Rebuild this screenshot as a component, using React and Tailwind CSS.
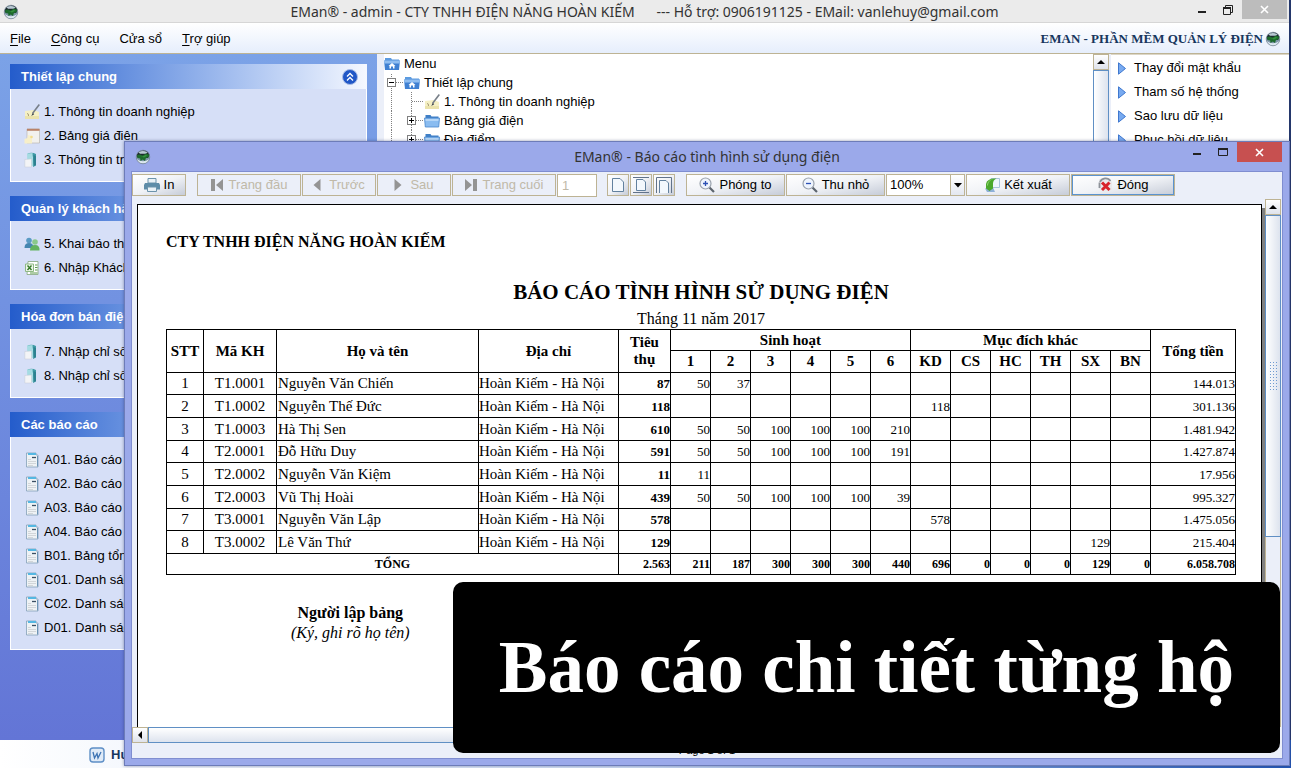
// src/App.jsx
import React from "react";
import clsx from "clsx";

const MENUS = [
  { key: "F", rest: "ile" },
  { key: "C", rest: "ông cụ" },
  { key: "", rest: "Cửa sổ" },
  { key: "T", rest: "rợ giúp" },
];

const PANELS = [
  {
    title: "Thiết lập chung",
    items: [
      { icon: "note", label: "1. Thông tin doanh nghiệp" },
      { icon: "price", label: "2. Bảng giá điện" },
      { icon: "meter", label: "3. Thông tin trạm" },
    ],
  },
  {
    title: "Quản lý khách hàng",
    items: [
      { icon: "users", label: "5. Khai báo thông tin" },
      { icon: "excel", label: "6. Nhập Khách hàng" },
    ],
  },
  {
    title: "Hóa đơn bán điện",
    items: [
      { icon: "meter", label: "7. Nhập chỉ số" },
      { icon: "meter", label: "8. Nhập chỉ số" },
    ],
  },
  {
    title: "Các báo cáo",
    items: [
      { icon: "report", label: "A01. Báo cáo" },
      { icon: "report", label: "A02. Báo cáo" },
      { icon: "report", label: "A03. Báo cáo" },
      { icon: "report", label: "A04. Báo cáo" },
      { icon: "report", label: "B01. Bảng tổng" },
      { icon: "report", label: "C01. Danh sách" },
      { icon: "report", label: "C02. Danh sách" },
      { icon: "report", label: "D01. Danh sách" },
    ],
  },
];

const TREE = [
  { guides: [], icon: "home", label: "Menu" },
  { guides: ["minus"], icon: "home", label: "Thiết lập chung" },
  { guides: ["line", "tee"], icon: "note", label: "1. Thông tin doanh nghiệp" },
  { guides: ["line", "plus"], icon: "folder", label: "Bảng giá điện" },
  { guides: ["line", "plus"], icon: "folder", label: "Địa điểm" },
];

const SHORTCUTS = ["Thay đổi mật khẩu", "Tham số hệ thống", "Sao lưu dữ liệu", "Phục hồi dữ liệu"];

const BANDS = ["1", "2", "3", "4", "5", "6"];
const PURPOSES = ["KD", "CS", "HC", "TH", "SX", "BN"];
const ADDRESS = "Hoàn Kiếm - Hà Nội";

const ROWS = [
  { code: "T1.0001", name: "Nguyễn Văn Chiến", used: "87", cells: ["50", "37", "", "", "", "", "", "", "", "", "", ""], total: "144.013" },
  { code: "T1.0002", name: "Nguyễn Thế Đức", used: "118", cells: ["", "", "", "", "", "", "118", "", "", "", "", ""], total: "301.136" },
  { code: "T1.0003", name: "Hà Thị Sen", used: "610", cells: ["50", "50", "100", "100", "100", "210", "", "", "", "", "", ""], total: "1.481.942" },
  { code: "T2.0001", name: "Đỗ Hữu Duy", used: "591", cells: ["50", "50", "100", "100", "100", "191", "", "", "", "", "", ""], total: "1.427.874" },
  { code: "T2.0002", name: "Nguyễn Văn Kiệm", used: "11", cells: ["11", "", "", "", "", "", "", "", "", "", "", ""], total: "17.956" },
  { code: "T2.0003", name: "Vũ Thị Hoài", used: "439", cells: ["50", "50", "100", "100", "100", "39", "", "", "", "", "", ""], total: "995.327" },
  { code: "T3.0001", name: "Nguyễn Văn Lập", used: "578", cells: ["", "", "", "", "", "", "578", "", "", "", "", ""], total: "1.475.056" },
  { code: "T3.0002", name: "Lê Văn Thứ", used: "129", cells: ["", "", "", "", "", "", "", "", "", "", "129", ""], total: "215.404" },
];

const SUMS = ["2.563", "211", "187", "300", "300", "300", "440", "696", "0", "0", "0", "129", "0", "6.058.708"];

/* ---------- icons ---------- */

function Svg({ w = 16, h = 16, className, children }) {
  return (
    <svg width={w} height={h} viewBox={`0 0 ${w} ${h}`} className={clsx("shrink-0", className)} aria-hidden="true">
      {children}
    </svg>
  );
}

function Globe() {
  return (
    <Svg>
      <circle cx="8" cy="8" r="6.8" fill="#7d95a8" />
      <path d="M1.500 7A6.800 6.800 0 0 1 14.500 6l-1.500 3H3z" fill="#1f2a30" />
      <path d="M3.500 3.200Q8 .8 12.500 3.400L11 4.800H5z" fill="#b9c9d3" />
      <path d="M1.600 10q6.400 4.500 12.800 0A6.800 6.800 0 0 1 1.600 10z" fill="#dce8f0" />
      <path d="M2 6l3-.6 2.500 1 3.500-1.800 3.300 1.200-.8 2.400-2.700 1L10 12l-2.200-1.400L5.500 12l-.3-2.600L2.500 9z" fill="#1d6b2c" />
      <path d="M4 6.600l3.500.9 3-1.500 2 .6-3.500 2z" fill="#37923f" />
      <circle cx="8" cy="8" r="6.8" fill="none" stroke="#6b7b88" strokeWidth=".6" />
    </Svg>
  );
}

function ItemIcon({ name }) {
  if (name === "note") {
    return (
      <Svg>
        <path d="M1 7l9-1 5 2v6.500H1z" fill="#f5f0c4" />
        <path d="M1 12h14v3H1z" fill="#ebe3ab" />
        <path d="M3 9.500q2 0 1.500 2.500" fill="none" stroke="#a89f78" />
        <path d="M15.300.6L8.500 9.500" stroke="#777f88" strokeWidth="1.600" />
        <path d="M8.800 9l-1.600 3 3-1.800z" fill="#3b424a" />
      </Svg>
    );
  }
  if (name === "price") {
    return (
      <Svg>
        <path d="M3 1h12.500v14H3z" fill="#f2f1ee" stroke="#b5b0a4" strokeWidth=".6" />
        <path d="M3 .8h12.500v2H3z" fill="#b98268" />
        <path d="M.5 11l3-1 .5-3 4 1v7.500H.5z" fill="#f7efc9" />
        <circle cx="7.500" cy="9" r="1.300" fill="#f3dd8c" />
      </Svg>
    );
  }
  if (name === "meter") {
    return (
      <Svg>
        <path d="M3.500 1.500Q8 0 12 2v11.500l-3 1.500V5z" fill="#3f9aa5" />
        <path d="M3 1.500L8.500 1l1 13H3.500z" fill="#a5dbe2" />
        <path d="M9.500 3l2.500 1v9l-2.500 1z" fill="#2d8190" />
        <path d="M.8 7.500l6.700-.6V15H.8z" fill="#f3f4f6" stroke="#c4cbd6" strokeWidth=".5" />
      </Svg>
    );
  }
  if (name === "users") {
    return (
      <Svg>
        <circle cx="5" cy="4.500" r="2.800" fill="#5a9bc4" />
        <path d="M.5 12q0-5 4.500-5t4.500 5z" fill="#4586b0" />
        <circle cx="11" cy="6" r="2.800" fill="#8ac98b" />
        <path d="M6 14.500Q6 9 11 9t4.500 5.500z" fill="#63b35f" />
      </Svg>
    );
  }
  if (name === "excel") {
    return (
      <Svg>
        <path d="M4 1.500h10v13H3z" fill="#fff" stroke="#84a67d" strokeWidth=".8" />
        <path d="M11 5h2.500M11 7.500h2.500M11 10h2.500M6 13h7.500" stroke="#5c9a4c" />
        <path d="M1.500 4h8v7.500h-8z" fill="#edf6e9" stroke="#8db884" />
        <path d="M3.500 5.500l4 4.500M7.500 5.500l-4 4.500" stroke="#357a27" strokeWidth="1.400" />
      </Svg>
    );
  }
  if (name === "report") {
    return (
      <Svg>
        <path d="M2.500 1H12v2h2v12H2.500z" fill="#eef2f5" stroke="#84a0b8" strokeWidth=".8" />
        <path d="M4 1h8v2H4z" fill="#55b7e2" />
        <path d="M8 5.500h4" stroke="#3b4f63" strokeWidth="1.300" />
        <path d="M4 7.500h3M4 9.500h8M4 11.500h8M4 13.500h5" stroke="#d2d6d9" />
        <path d="M13.500 4v10.500" stroke="#6c94b5" />
      </Svg>
    );
  }
  if (name === "home") {
    return (
      <Svg>
        <path d="M1 2h6l1 1.500h7V7H1z" fill="#5c9be0" />
        <path d="M0 4.500h16l-1 9.500H1z" fill="#3f80d2" />
        <path d="M0 4.500h16l-.4 3H.4z" fill="#8fbdf0" />
        <path d="M8 7l3.500 3h-1v2.500H9v-2H7v2H5.500V10h-1z" fill="#fff" />
      </Svg>
    );
  }
  return (
    <Svg>
      <path d="M1.500 2h5l1 1.500h7V7h-13z" fill="#3f7fc6" />
      <path d="M.5 5h15l-.8 9H1.300z" fill="#8abcf0" stroke="#4787cc" strokeWidth=".8" />
      <path d="M1.500 6h13l-.1 2H1.600z" fill="#b5d6f7" />
    </Svg>
  );
}

// one 20px column of the tree: dotted guide line with an optional expander
function Guide({ kind }) {
  const box = kind === "plus" || kind === "minus";
  return (
    <Svg w={20} h={19}>
      <path d={kind === "minus" ? "M7.500 1v18" : "M7.500 0v19"} stroke="#808080" strokeDasharray="1 1" />
      {kind !== "line" && <path d="M8 9.500h12" stroke="#808080" strokeDasharray="1 1" />}
      {box && <rect x="3.500" y="5.500" width="8" height="8" fill="#fff" stroke="#808080" />}
      {box && <path d="M5 9.500h5" stroke="#000" />}
      {kind === "plus" && <path d="M7.500 7v5" stroke="#000" />}
    </Svg>
  );
}

function Magnifier({ plus }) {
  return (
    <Svg>
      <path d="M10.500 10.500l4.500 4.500" stroke="#5d656e" strokeWidth="2.200" />
      <circle cx="6.500" cy="6.500" r="5.500" fill="#eef4fd" stroke="#9aa2ac" strokeWidth="1.200" />
      <path d={plus ? "M4 6.500h5M6.500 4v5" : "M4 6.500h5"} stroke="#2c50b5" strokeWidth="1.300" />
    </Svg>
  );
}

function PageIcon({ fit }) {
  return (
    <Svg>
      {fit === "height" && <path d="M0 .5h16M0 15.500h16" stroke="#62738a" />}
      {fit === "width" && <path d="M.5 16V.5h15V16" fill="none" stroke="#62738a" />}
      <path
        d={fit === "width" ? "M3.500 16V3.500H10l2.500 2.500v10" : fit ? "M3.500 2.500H10l2.500 2.500v8.500h-9z" : "M2.500 1.500H10l3.500 3.500v9.500h-11z"}
        fill="#f3f8fd"
        stroke="#62819f"
      />
    </Svg>
  );
}

function Cross() {
  return (
    <Svg w={9} h={9}>
      <path d="M1 1l7 7M8 1L1 8" stroke="#fff" strokeWidth="1.600" />
    </Svg>
  );
}

/* ---------- shared bits ---------- */

function ToolButton({ className, disabled, focused, children, ...rest }) {
  return (
    <button
      type="button"
      disabled={disabled}
      className={clsx(
        "flex h-[22px] items-center justify-center whitespace-nowrap border border-[#bdb394] text-[13px]",
        disabled ? "text-[#c0b9a8]" : "bg-linear-to-br from-white via-[#f0f2f6] to-[#c6ccd8] text-black",
        focused && "outline outline-1 -outline-offset-2 outline-[#5b93cf]",
        className
      )}
      {...rest}
    >
      {children}
    </button>
  );
}

function ScrollArrow({ dir }) {
  return (
    <button
      type="button"
      aria-label={dir === "up" ? "Cuộn lên" : "Cuộn trái"}
      className="flex size-4 shrink-0 items-center justify-center border border-[#bdb394] bg-linear-to-b from-white to-[#dfe3ec]"
    >
      <Svg w={8} h={8}>
        <path d={dir === "up" ? "M0 6l4-4 4 4z" : "M6 0L2 4l4 4z"} fill="#000" />
      </Svg>
    </button>
  );
}

/* ---------- main window ---------- */

function TitleBar() {
  return (
    <header className="grid h-[23px] shrink-0 grid-cols-[1fr_auto_1fr] border-b border-[#d6d6d6] bg-[#ebebeb]">
      <div className="flex items-center pl-[3px]">
        <Globe />
      </div>
      <h1 className="whitespace-pre font-['Noto_Sans',sans-serif] text-[14px] leading-[23px] text-[#333]">
        {"EMan® - admin - CTY TNHH ĐIỆN NĂNG HOÀN KIẾM      --- Hỗ trợ: 0906191125 - EMail: vanlehuy@gmail.com"}
      </h1>
      <div className="flex items-start justify-end pr-0.5">
        <button type="button" aria-label="Thu nhỏ cửa sổ" className="flex h-5 w-6 items-center justify-center">
          <Svg w={8} h={8}>
            <path d="M0 5h8v2H0z" fill="#222" />
          </Svg>
        </button>
        <button type="button" aria-label="Khôi phục" className="flex h-5 w-7 items-center justify-center">
          <Svg w={10} h={10}>
            <path d="M2.500 2V.5h7v7H8" fill="none" stroke="#222" />
            <path d="M.5 3h7v6.500h-7z" fill="none" stroke="#222" />
            <path d="M0 2h8v2H0z" fill="#222" />
          </Svg>
        </button>
        <button type="button" aria-label="Đóng ứng dụng" className="flex h-[19px] w-[45px] items-center justify-center bg-[#bcbcbc]">
          <Cross />
        </button>
      </div>
    </header>
  );
}

function MenuBar() {
  return (
    <nav className="flex h-[31px] shrink-0 items-center border-b border-[#bdb394] bg-linear-to-b from-white to-[#e6eefc] pl-2.5 pr-2 pt-px">
      <div className="flex gap-5 text-[13px]">
        {MENUS.map((m) => (
          <button type="button" key={m.rest}>
            <span className="underline underline-offset-2">{m.key}</span>
            {m.rest}
          </button>
        ))}
      </div>
      <div className="ml-auto flex items-center gap-0.5 font-['Liberation_Serif',serif] text-[13px] font-bold text-[#17365d]">
        EMAN - PHẦN MỀM QUẢN LÝ ĐIỆN
        <Globe />
      </div>
    </nav>
  );
}

function Panel({ title, items }) {
  return (
    <section>
      <div className="flex h-[25px] items-center justify-between bg-linear-to-r from-[#245ccb] to-[#f5f8ff] pl-[11px] pr-2">
        <h2 className="text-[13px] font-bold text-white">{title}</h2>
        <button type="button" aria-label={`Thu gọn ${title}`}>
          <Svg w={18} h={18}>
            <circle cx="9" cy="9" r="7.500" fill="#2057c7" stroke="#a9bde6" />
            <path d="M6 8.500l3-3 3 3M6 12.500l3-3 3 3" fill="none" stroke="#fff" strokeWidth="1.300" />
          </Svg>
        </button>
      </div>
      <ul className="border border-t-0 border-white bg-[#d6dff7] pb-[9px] pl-[13px] pt-[11px] text-[13px]">
        {items.map((it) => (
          <li key={it.label} className="flex h-6 items-center gap-1">
            <ItemIcon name={it.icon} />
            <a href="#" className="whitespace-nowrap">{it.label}</a>
          </li>
        ))}
      </ul>
    </section>
  );
}

function Tree() {
  return (
    <div className="flex min-w-0 flex-1 bg-white">
      <ul className="flex-1 text-[13px]">
        {TREE.map((n) => (
          <li key={n.label} className="flex h-[19px] items-center">
            {n.guides.map((g, i) => (
              <Guide key={i} kind={g} />
            ))}
            <ItemIcon name={n.icon} />
            <span className="ml-1">{n.label}</span>
          </li>
        ))}
      </ul>
      <div className="flex w-4 flex-col bg-[#ebeff9]">
        <ScrollArrow dir="up" />
        <div className="flex-1 border border-[#5f8fc4] bg-linear-to-r from-white to-[#dde3ee]" />
      </div>
    </div>
  );
}

function Shortcuts() {
  return (
    <ul className="w-[178px] border-t border-[#dcd6c6] bg-white pl-[7px] pt-px text-[13px]">
      {SHORTCUTS.map((s) => (
        <li key={s} className="flex h-6 items-center gap-2">
          <Svg w={8} h={13}>
            <path d="M.5 .8v11.400L7.500 6.500z" fill="#78aaf0" stroke="#3f78cf" />
          </Svg>
          <a href="#">{s}</a>
        </li>
      ))}
    </ul>
  );
}

/* ---------- report window ---------- */

function Toolbar() {
  return (
    <div className="flex h-[27px] shrink-0 items-start pt-0.5">
      <ToolButton className="w-[54px] gap-1">
        <Svg>
          <path d="M4 1.500h8V6H4z" fill="#e9f1f6" stroke="#6c93ab" />
          <path d="M1 6h14l1 2v4.500H0V8z" fill="#5d8ca8" />
          <path d="M3.500 10h9v4.500h-9z" fill="#e9f1f6" stroke="#6c93ab" />
        </Svg>
        In
      </ToolButton>

      <div className="ml-[11px] flex gap-px">
        <ToolButton disabled className="w-[104px] gap-1.5">
          <Svg w={12} h={12}>
            <path d="M0 0h4v12H0zM12 0v12L5 6z" fill="#949494" />
          </Svg>
          Trang đầu
        </ToolButton>
        <ToolButton disabled className="w-[74px] gap-2">
          <Svg w={8} h={12}>
            <path d="M7.500 0v12L.5 6z" fill="#949494" />
          </Svg>
          Trước
        </ToolButton>
        <ToolButton disabled className="w-[74px] gap-2">
          <Svg w={8} h={12}>
            <path d="M.5 0v12l7-6z" fill="#949494" />
          </Svg>
          Sau
        </ToolButton>
        <ToolButton disabled className="w-[104px] gap-1.5">
          <Svg w={12} h={12}>
            <path d="M8 0h4v12H8zM0 0v12l7-6z" fill="#949494" />
          </Svg>
          Trang cuối
        </ToolButton>
        <input
          aria-label="Trang"
          defaultValue="1"
          disabled
          className="h-[23px] w-10 border border-[#bdb394] bg-white px-1 text-[13px] text-[#c0b9a8]"
        />
      </div>

      <div className="ml-2.5 flex gap-px">
        <ToolButton className="w-[22px]" aria-label="Cỡ thật"><PageIcon /></ToolButton>
        <ToolButton className="w-[22px]" aria-label="Vừa trang"><PageIcon fit="height" /></ToolButton>
        <ToolButton className="w-[22px]" aria-label="Vừa chiều rộng"><PageIcon fit="width" /></ToolButton>
      </div>

      <div className="ml-[11px] flex gap-px">
        <ToolButton className="w-[99px] gap-1">
          <Magnifier plus />
          Phóng to
        </ToolButton>
        <ToolButton className="w-[99px] gap-1">
          <Magnifier />
          Thu nhỏ
        </ToolButton>
        <div className="relative w-[79px]">
          <select
            aria-label="Tỷ lệ"
            className="block h-[22px] w-full appearance-none border border-[#bdb394] bg-white px-[3px] text-[13px] leading-5"
          >
            <option>100%</option>
          </select>
          <span className="pointer-events-none absolute inset-y-0 right-0 flex w-[15px] items-center justify-center border border-[#bdb394] bg-linear-to-b from-white to-[#e3e7f0]">
            <Svg w={8} h={5}>
              <path d="M0 0h8L4 4.500z" fill="#000" />
            </Svg>
          </span>
        </div>
        <ToolButton className="w-[104px] gap-1">
          <Svg>
            <path d="M7 1.500h8.500v9H7z" fill="#eef5fb" stroke="#a9c3da" />
            <path d="M1 11.500l8-1 2 4.500H3z" fill="#8fb1d8" />
            <path d="M12.500 1.500Q9 3 9 6.500v5L5.500 14 2 11.500V7Q3 1 12.500 1.500z" fill="#4ca82c" />
            <path d="M10 2Q4.500 3 4 8l-1 1V7.500Q4 2.500 10 2z" fill="#8fd672" />
          </Svg>
          Kết xuất
        </ToolButton>
        <ToolButton focused className="w-[104px] gap-1">
          <Svg>
            <path d="M2 2l10-1 3 4v8l-8 2-5-3z" fill="#e9eaec" />
            <path d="M3 5a6 6 0 0 1 10.500-1M2.500 11V5.500" fill="none" stroke="#8d9299" strokeWidth="1.800" />
            <path d="M5 5.500l7.500 7.500M12.500 5.500L5 13" stroke="#d8232a" strokeWidth="3" />
          </Svg>
          Đóng
        </ToolButton>
      </div>
    </div>
  );
}

const CELL = "border border-black p-0";

function ReportTable() {
  return (
    <table className="w-full table-fixed border-collapse text-[15px] leading-[17px]">
      <colgroup>
        <col className="w-[37px]" />
        <col className="w-[73px]" />
        <col />
        <col className="w-[140px]" />
        <col className="w-[52px]" />
        {BANDS.concat(PURPOSES).map((c) => (
          <col key={c} className="w-10" />
        ))}
        <col className="w-[85px]" />
      </colgroup>
      <thead>
        <tr className="h-[21px]">
          <th rowSpan={2} className={CELL}>STT</th>
          <th rowSpan={2} className={CELL}>Mã KH</th>
          <th rowSpan={2} className={CELL}>Họ và tên</th>
          <th rowSpan={2} className={CELL}>Địa chỉ</th>
          <th rowSpan={2} className={clsx(CELL, "px-2")}>Tiêu thụ</th>
          <th colSpan={6} className={CELL}>Sinh hoạt</th>
          <th colSpan={6} className={CELL}>Mục đích khác</th>
          <th rowSpan={2} className={CELL}>Tổng tiền</th>
        </tr>
        <tr className="h-[22px]">
          {BANDS.concat(PURPOSES).map((c) => (
            <th key={c} className={CELL}>{c}</th>
          ))}
        </tr>
      </thead>
      <tbody>
        {ROWS.map((r, i) => (
          <tr key={r.code} className={i % 3 === 0 ? "h-[22px]" : "h-[23px]"}>
            <td className={clsx(CELL, "text-center")}>{i + 1}</td>
            <td className={clsx(CELL, "text-center")}>{r.code}</td>
            <td className={clsx(CELL, "pl-px")}>{r.name}</td>
            <td className={CELL}>{ADDRESS}</td>
            <td className={clsx(CELL, "text-right text-[13px] font-bold")}>{r.used}</td>
            {r.cells.map((v, k) => (
              <td key={k} className={clsx(CELL, "text-right text-[13px]")}>{v}</td>
            ))}
            <td className={clsx(CELL, "text-right text-[13px]")}>{r.total}</td>
          </tr>
        ))}
      </tbody>
      <tfoot>
        <tr className="h-[21px] text-[12px] font-bold">
          <td colSpan={4} className={clsx(CELL, "text-center")}>TỔNG</td>
          {SUMS.map((v, k) => (
            <td key={k} className={clsx(CELL, "text-right")}>{v}</td>
          ))}
        </tr>
      </tfoot>
    </table>
  );
}

function Report() {
  return (
    <article className="min-w-0 flex-1 border border-b-0 border-black bg-white pl-7 pr-[25px] pt-[27px] font-['Liberation_Serif',serif] text-[16px] leading-5 shadow-[3px_4px_0_#808080]">
      <p className="font-bold">CTY TNHH ĐIỆN NĂNG HOÀN KIẾM</p>
      <h3 className="mt-6 text-center text-[21px] font-bold leading-8">BÁO CÁO TÌNH HÌNH SỬ DỤNG ĐIỆN</h3>
      <p className="mt-px text-center">Tháng 11 năm 2017</p>
      <ReportTable />
      <div className="ml-[125px] mt-7 w-fit text-center">
        <p className="font-bold">Người lập bảng</p>
        <p className="italic">(Ký, ghi rõ họ tên)</p>
      </div>
    </article>
  );
}

function ReportWindow() {
  return (
    <div
      role="dialog"
      aria-label="Báo cáo tình hình sử dụng điện"
      className="absolute bottom-0.5 left-[124px] right-px top-[141px] flex flex-col border border-[#6d7cb8] bg-[#9ba9ea] px-[7px] pb-[7px] shadow-[0_0_3px_rgba(40,50,100,0.5)]"
    >
      <div className="grid h-[30px] shrink-0 grid-cols-[1fr_auto_1fr]">
        <div className="flex items-center pl-[3px]">
          <Globe />
        </div>
        <h2 className="font-['Noto_Sans',sans-serif] text-[14px] leading-[30px] text-[#333]">
          EMan® - Báo cáo tình hình sử dụng điện
        </h2>
        <div className="flex items-start justify-end">
          <button type="button" aria-label="Thu nhỏ" className="flex h-5 w-6 items-center justify-center">
            <Svg w={8} h={8}>
              <path d="M0 5h8v2H0z" fill="#222" />
            </Svg>
          </button>
          <button type="button" aria-label="Phóng to" className="flex h-5 w-7 items-center justify-center">
            <Svg w={10} h={8}>
              <path d="M.5 1h9v6.500h-9z" fill="none" stroke="#222" />
              <path d="M0 0h10v2H0z" fill="#222" />
            </Svg>
          </button>
          <button type="button" aria-label="Đóng" className="flex h-5 w-[45px] items-center justify-center bg-[#c75050]">
            <Cross />
          </button>
        </div>
      </div>

      <div className="flex min-h-0 flex-1 flex-col bg-[#ebeff9] outline outline-1 outline-[#7f8dd0]">
        <Toolbar />
        <div className="flex min-h-0 flex-1">
          <div className="flex min-w-0 flex-1 overflow-hidden pl-[5px] pr-[3px] pt-[5px]">
            <Report />
          </div>
          <div className="mr-px flex w-4 flex-col border-x border-[#bdb394]">
            <div className="-mx-px flex">
              <ScrollArrow dir="up" />
            </div>
            <div className="-mx-px flex h-[61%] items-center justify-center border border-[#5f8fc4] bg-linear-to-r from-white to-[#dde3ee]">
              <div className="h-[30px] w-2 bg-[radial-gradient(#6f9bd1_1px,transparent_1px)] bg-[length:3px_3px]" />
            </div>
          </div>
        </div>
        <div className="mr-[17px] flex h-4 shrink-0">
          <ScrollArrow dir="left" />
          <div className="flex-1 border border-[#5f8fc4] bg-linear-to-b from-white to-[#dde3ee]" />
        </div>
        <p className="h-[15px] shrink-0 text-center text-[11px] leading-[15px]">Page 1 of 1</p>
      </div>
    </div>
  );
}

function Caption() {
  return (
    <p className="absolute bottom-[15px] right-[11px] rounded-[10px] bg-black px-[46px] py-10 font-['Liberation_Serif',serif] text-[73px] font-bold leading-[91px] text-white">
      Báo cáo chi tiết từng hộ
    </p>
  );
}

export default function App() {
  return (
    <div className="relative flex h-screen flex-col overflow-hidden bg-[#ebeff9] font-['Liberation_Sans',Arial,sans-serif] text-black">
      <div className="flex min-h-0 flex-1 flex-col border-r-2 border-[#24376b]">
        <TitleBar />
        <MenuBar />
        <main className="flex min-h-0 flex-1">
          <aside className="flex w-[377px] flex-col gap-3.5 bg-linear-to-b from-[#7ba2e7] to-[#6375d6] px-2.5 pt-2.5">
            {PANELS.map((p) => (
              <Panel key={p.title} {...p} />
            ))}
          </aside>
          <div className="w-[7px]" />
          <Tree />
          <div className="w-0.5" />
          <Shortcuts />
        </main>
      </div>
      <footer className="flex h-7 shrink-0 items-center gap-1.5 bg-linear-to-r from-white via-[#cddcf5] to-[#2458b8] pl-[89px] pt-0.5 text-[13px] font-bold text-[#17365d]">
        <Svg>
          <rect x="1" y="1" width="14" height="14" rx="3" fill="#dfeaf7" stroke="#5e8fc6" strokeWidth="1.400" />
          <path d="M4 5l1.500 6L8 6.500l1 4.500L12 5" fill="none" stroke="#3d73b3" strokeWidth="1.300" />
        </Svg>
        Hướng dẫn
      </footer>
      <ReportWindow />
      <Caption />
    </div>
  );
}
